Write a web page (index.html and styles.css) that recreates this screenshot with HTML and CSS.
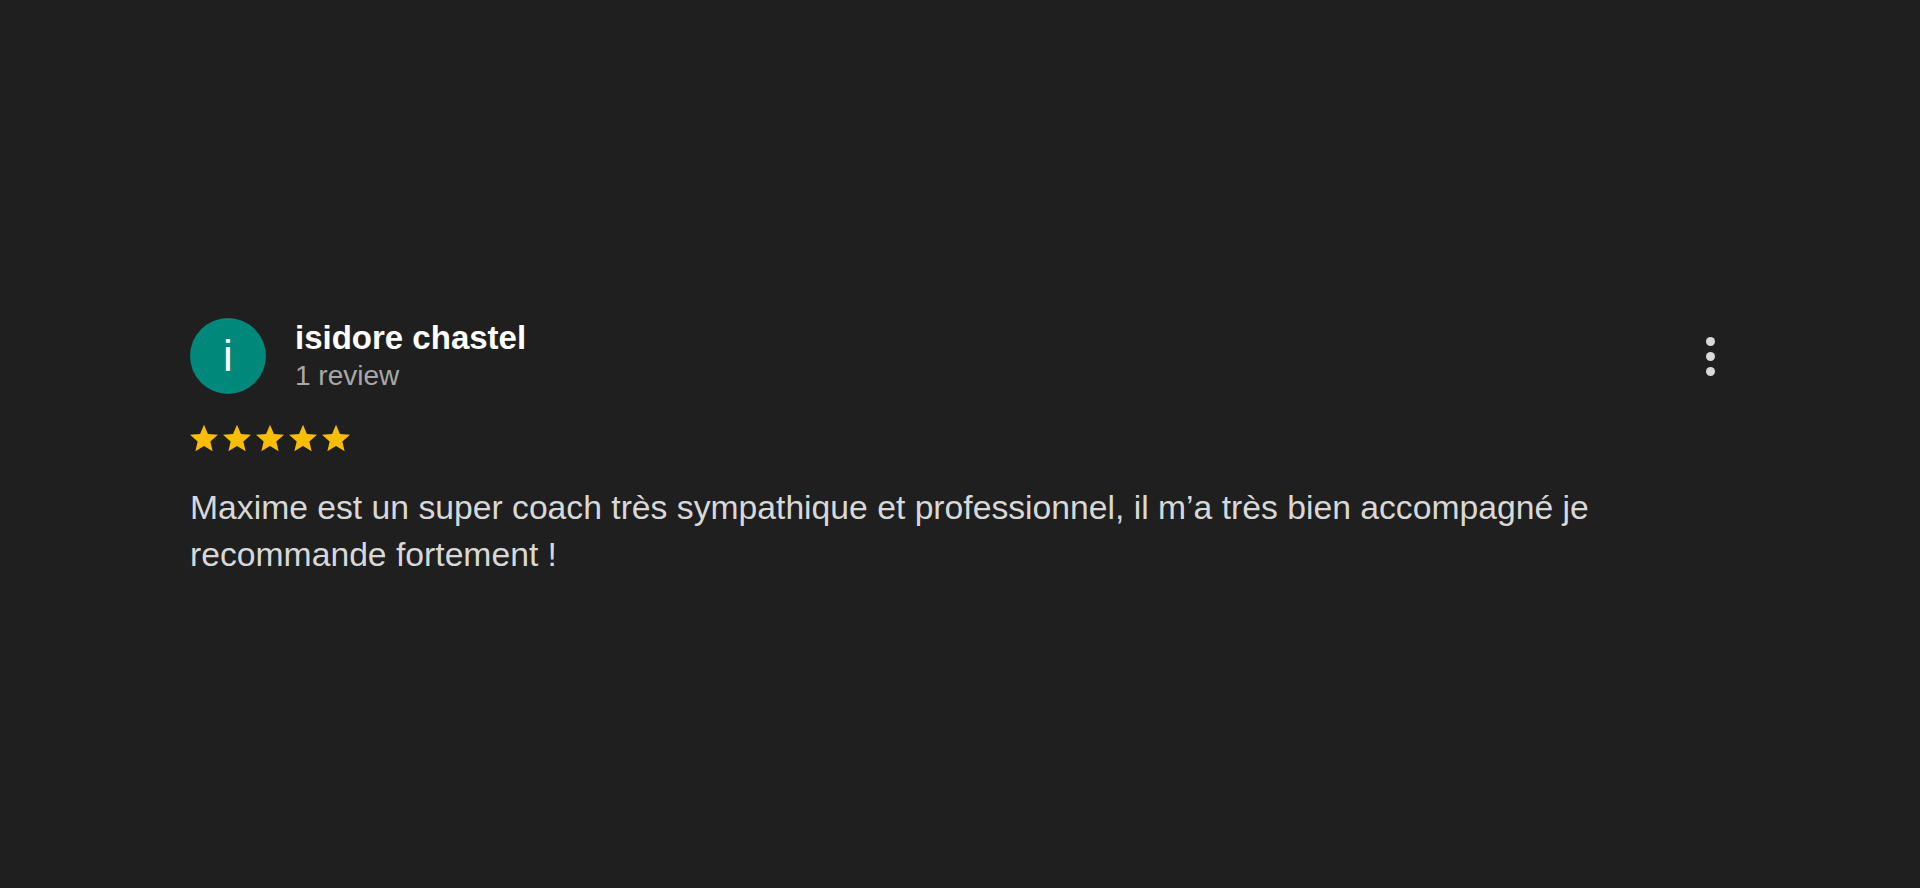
FILE: index.html
```html
<!DOCTYPE html>
<html lang="fr">
<head>
<meta charset="utf-8">
<title>Review</title>
<link rel="stylesheet" href="styles.css">
</head>
<body>
<main class="page">
  <article class="review">
    <header class="review-head">
      <div class="avatar">i</div>
      <div class="author">
        <div class="author-name">isidore chastel</div>
        <div class="author-meta">1 review</div>
      </div>
      <button class="more" aria-label="More options">
        <span class="dot"></span><span class="dot"></span><span class="dot"></span>
      </button>
    </header>
    <div class="stars" aria-label="5 stars">
      <svg class="star" viewBox="2 1.5 20 20"><path d="M12 17.27L18.18 21l-1.64-7.03L22 9.24l-7.19-.61L12 2 9.19 8.63 2 9.24l5.46 4.73L5.82 21z"/></svg>
      <svg class="star" viewBox="2 1.5 20 20"><path d="M12 17.27L18.18 21l-1.64-7.03L22 9.24l-7.19-.61L12 2 9.19 8.63 2 9.24l5.46 4.73L5.82 21z"/></svg>
      <svg class="star" viewBox="2 1.5 20 20"><path d="M12 17.27L18.18 21l-1.64-7.03L22 9.24l-7.19-.61L12 2 9.19 8.63 2 9.24l5.46 4.73L5.82 21z"/></svg>
      <svg class="star" viewBox="2 1.5 20 20"><path d="M12 17.27L18.18 21l-1.64-7.03L22 9.24l-7.19-.61L12 2 9.19 8.63 2 9.24l5.46 4.73L5.82 21z"/></svg>
      <svg class="star" viewBox="2 1.5 20 20"><path d="M12 17.27L18.18 21l-1.64-7.03L22 9.24l-7.19-.61L12 2 9.19 8.63 2 9.24l5.46 4.73L5.82 21z"/></svg>
    </div>
    <p class="review-text">Maxime est un super coach très sympathique et professionnel, il m’a très bien accompagné je recommande fortement !</p>
  </article>
</main>
</body>
</html>
```
FILE: styles.css
```css
html, body {
  margin: 0;
  padding: 0;
  background: #1f1f1f;
  height: 100%;
}
body {
  font-family: "Liberation Sans", Arial, Helvetica, sans-serif;
  color: #d6d6d6;
}
.page {
  padding: 318px 205px 0 190px;
}
.review-head {
  display: flex;
  align-items: center;
}
.avatar {
  width: 76px;
  height: 76px;
  border-radius: 50%;
  background: #00897b;
  color: #ffffff;
  font-size: 44px;
  line-height: 76px;
  text-align: center;
  flex: none;
}
.author {
  flex: 1;
  margin-left: 29px;
  align-self: flex-start;
}
.author-name {
  font-size: 33px;
  line-height: 40px;
  font-weight: 700;
  color: #ffffff;
}
.author-meta {
  font-size: 28px;
  line-height: 36px;
  color: #a8a8a8;
}
.more {
  background: none;
  border: 0;
  padding: 0;
  display: flex;
  flex-direction: column;
  gap: 6px;
  width: 9px;
}
.dot {
  width: 9px;
  height: 9px;
  border-radius: 50%;
  background: #d9d9d9;
}
.stars {
  display: flex;
  gap: 5px;
  margin-top: 30px;
  height: 28px;
}
.star {
  width: 28px;
  height: 28px;
  fill: #fbbc04;
}
.review-text {
  margin: 32px 0 0;
  font-size: 33.7px;
  line-height: 47px;
  color: #d8d8d8;
}
```
